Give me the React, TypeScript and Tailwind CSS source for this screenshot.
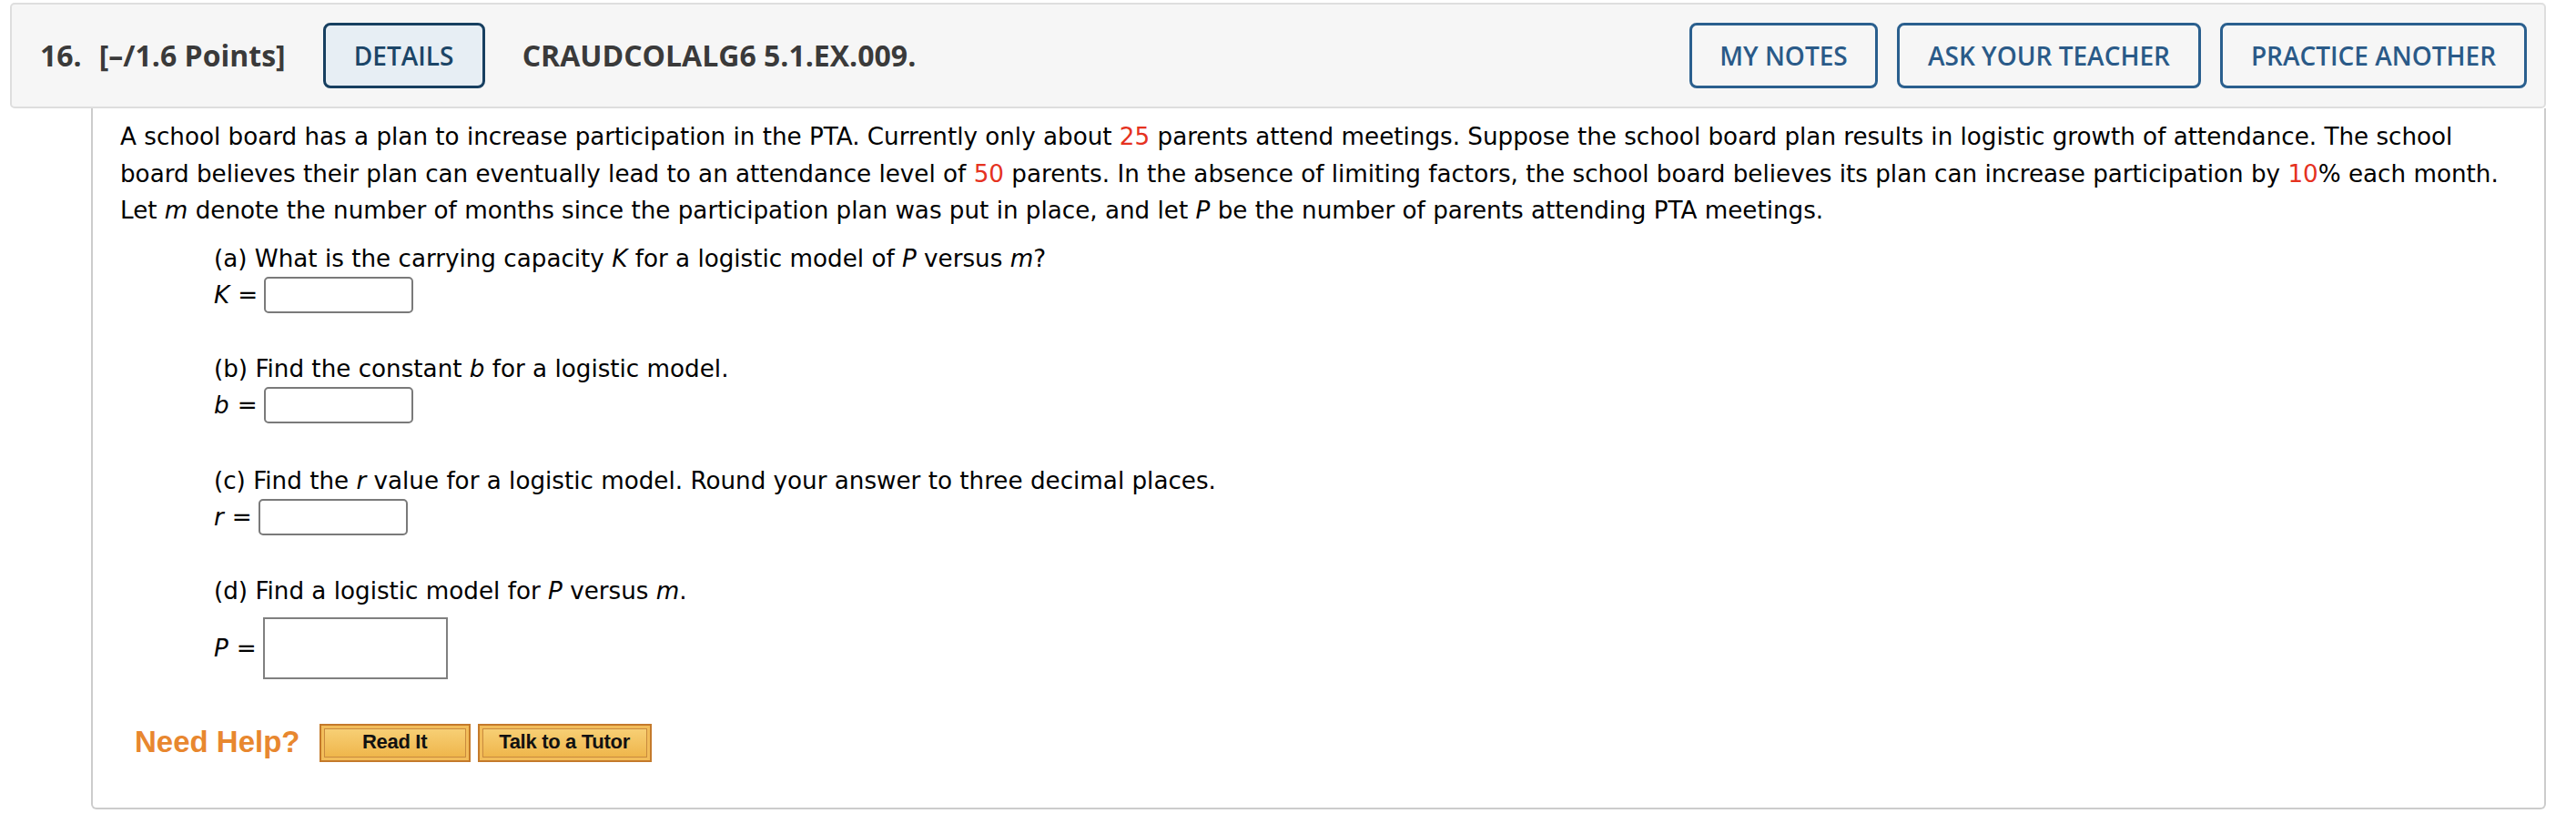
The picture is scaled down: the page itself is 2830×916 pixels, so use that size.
import React from "react";

const red = "text-[#e5321f]";

function Answer({ label, wide }: { label: string; wide?: boolean }) {
  return (
    <div className={`flex items-center ${wide ? "h-[68px]" : "h-[40px]"}`}>
      <span className="italic">{label}</span>
      <span className="ml-[9px]">=</span>
      {wide ? (
        <input className="ml-[7px] h-[68px] w-[203px] border-2 border-[#808080] bg-white outline-none" />
      ) : (
        <input className="ml-[7px] h-[40px] w-[164px] rounded-[5px] border-2 border-[#7a7a7a] bg-white outline-none" />
      )}
    </div>
  );
}

function HelpButton({ children, width }: { children: React.ReactNode; width: string }) {
  return (
    <button
      className={`${width} h-[42px] border-2 border-[#c47a2b] bg-[#f2bd5a] p-[3px] font-['Liberation_Sans',Arial,sans-serif]`}
    >
      <span className="flex h-full items-center justify-center border border-[#c98a3e] bg-gradient-to-b from-[#f7cf74] to-[#efb64b] text-[22px] font-bold tracking-[-0.3px] text-[#111]">
        {children}
      </span>
    </button>
  );
}

export default function App() {
  return (
    <div className="min-h-screen w-[2830px] bg-white pl-[11px] pr-[33px] pt-[3px]">
      {/* question header */}
      <div className="flex h-[116px] items-center rounded-[5px] border-2 border-[#dedede] bg-[#f6f6f6] pl-[31px] pr-[19px] font-['Open_Sans',sans-serif] text-[#3a3a3a]">
        <span className="text-[32px] font-bold">16.</span>
        <span className="ml-[19px] text-[32px] font-bold">[–/1.6 Points]</span>
        <button className="ml-[41px] h-[72px] w-[178px] rounded-[8px] border-[3px] border-[#173f60] bg-[#e7eef4] text-[28px] font-semibold text-[#1b4567]">
          DETAILS
        </button>
        <span className="ml-[41px] text-[32px] font-bold">CRAUDCOLALG6 5.1.EX.009.</span>
        <div className="ml-auto flex gap-[21px]">
          <button className="h-[72px] w-[207px] rounded-[8px] border-[3px] border-[#2a5f8e] text-[28px] font-semibold text-[#2a5a88]">
            MY NOTES
          </button>
          <button className="h-[72px] w-[334px] rounded-[8px] border-[3px] border-[#2a5f8e] text-[28px] font-semibold text-[#2a5a88]">
            ASK YOUR TEACHER
          </button>
          <button className="h-[72px] w-[337px] rounded-[8px] border-[3px] border-[#2a5f8e] text-[28px] font-semibold text-[#2a5a88]">
            PRACTICE ANOTHER
          </button>
        </div>
      </div>

      {/* question body */}
      <div className="ml-[89px] rounded-b-[6px] border-x-2 border-b-2 border-[#cccccc] pl-[30px] pr-[20px] pt-[11px] pb-[50px] font-['DejaVu_Sans',Verdana,sans-serif] text-[26.2px] leading-[40.5px] text-black">
        <p className="w-[2625px]">
          A school board has a plan to increase participation in the PTA. Currently only about{" "}
          <span className={red}>25</span> parents attend meetings. Suppose the school board plan results in
          logistic growth of attendance. The school board believes their plan can eventually lead to an
          attendance level of <span className={red}>50</span> parents. In the absence of limiting factors,
          the school board believes its plan can increase participation by <span className={red}>10</span>%
          each month. Let <i>m</i> denote the number of months since the participation plan was put in place,
          and let <i>P</i> be the number of parents attending PTA meetings.
        </p>

        <div className="ml-[103px] leading-[40px]">
          <p className="mt-[12px]">
            (a) What is the carrying capacity <i>K</i> for a logistic model of <i>P</i> versus <i>m</i>?
          </p>
          <Answer label="K" />

          <p className="mt-[41px]">
            (b) Find the constant <i>b</i> for a logistic model.
          </p>
          <Answer label="b" />

          <p className="mt-[43px]">
            (c) Find the <i>r</i> value for a logistic model. Round your answer to three decimal places.
          </p>
          <Answer label="r" />

          <p className="mt-[41px]">
            (d) Find a logistic model for <i>P</i> versus <i>m</i>.
          </p>
          <div className="mt-[9px]">
            <Answer label="P" wide />
          </div>
        </div>

        <div className="mt-[49px] flex items-center gap-[8px]">
          <span className="ml-[16px] mr-[13px] font-['Liberation_Sans',Arial,sans-serif] text-[33px] font-bold text-[#e8872f]">
            Need Help?
          </span>
          <HelpButton width="w-[166px]">Read It</HelpButton>
          <HelpButton width="w-[191px]">Talk to a Tutor</HelpButton>
        </div>
      </div>
    </div>
  );
}
